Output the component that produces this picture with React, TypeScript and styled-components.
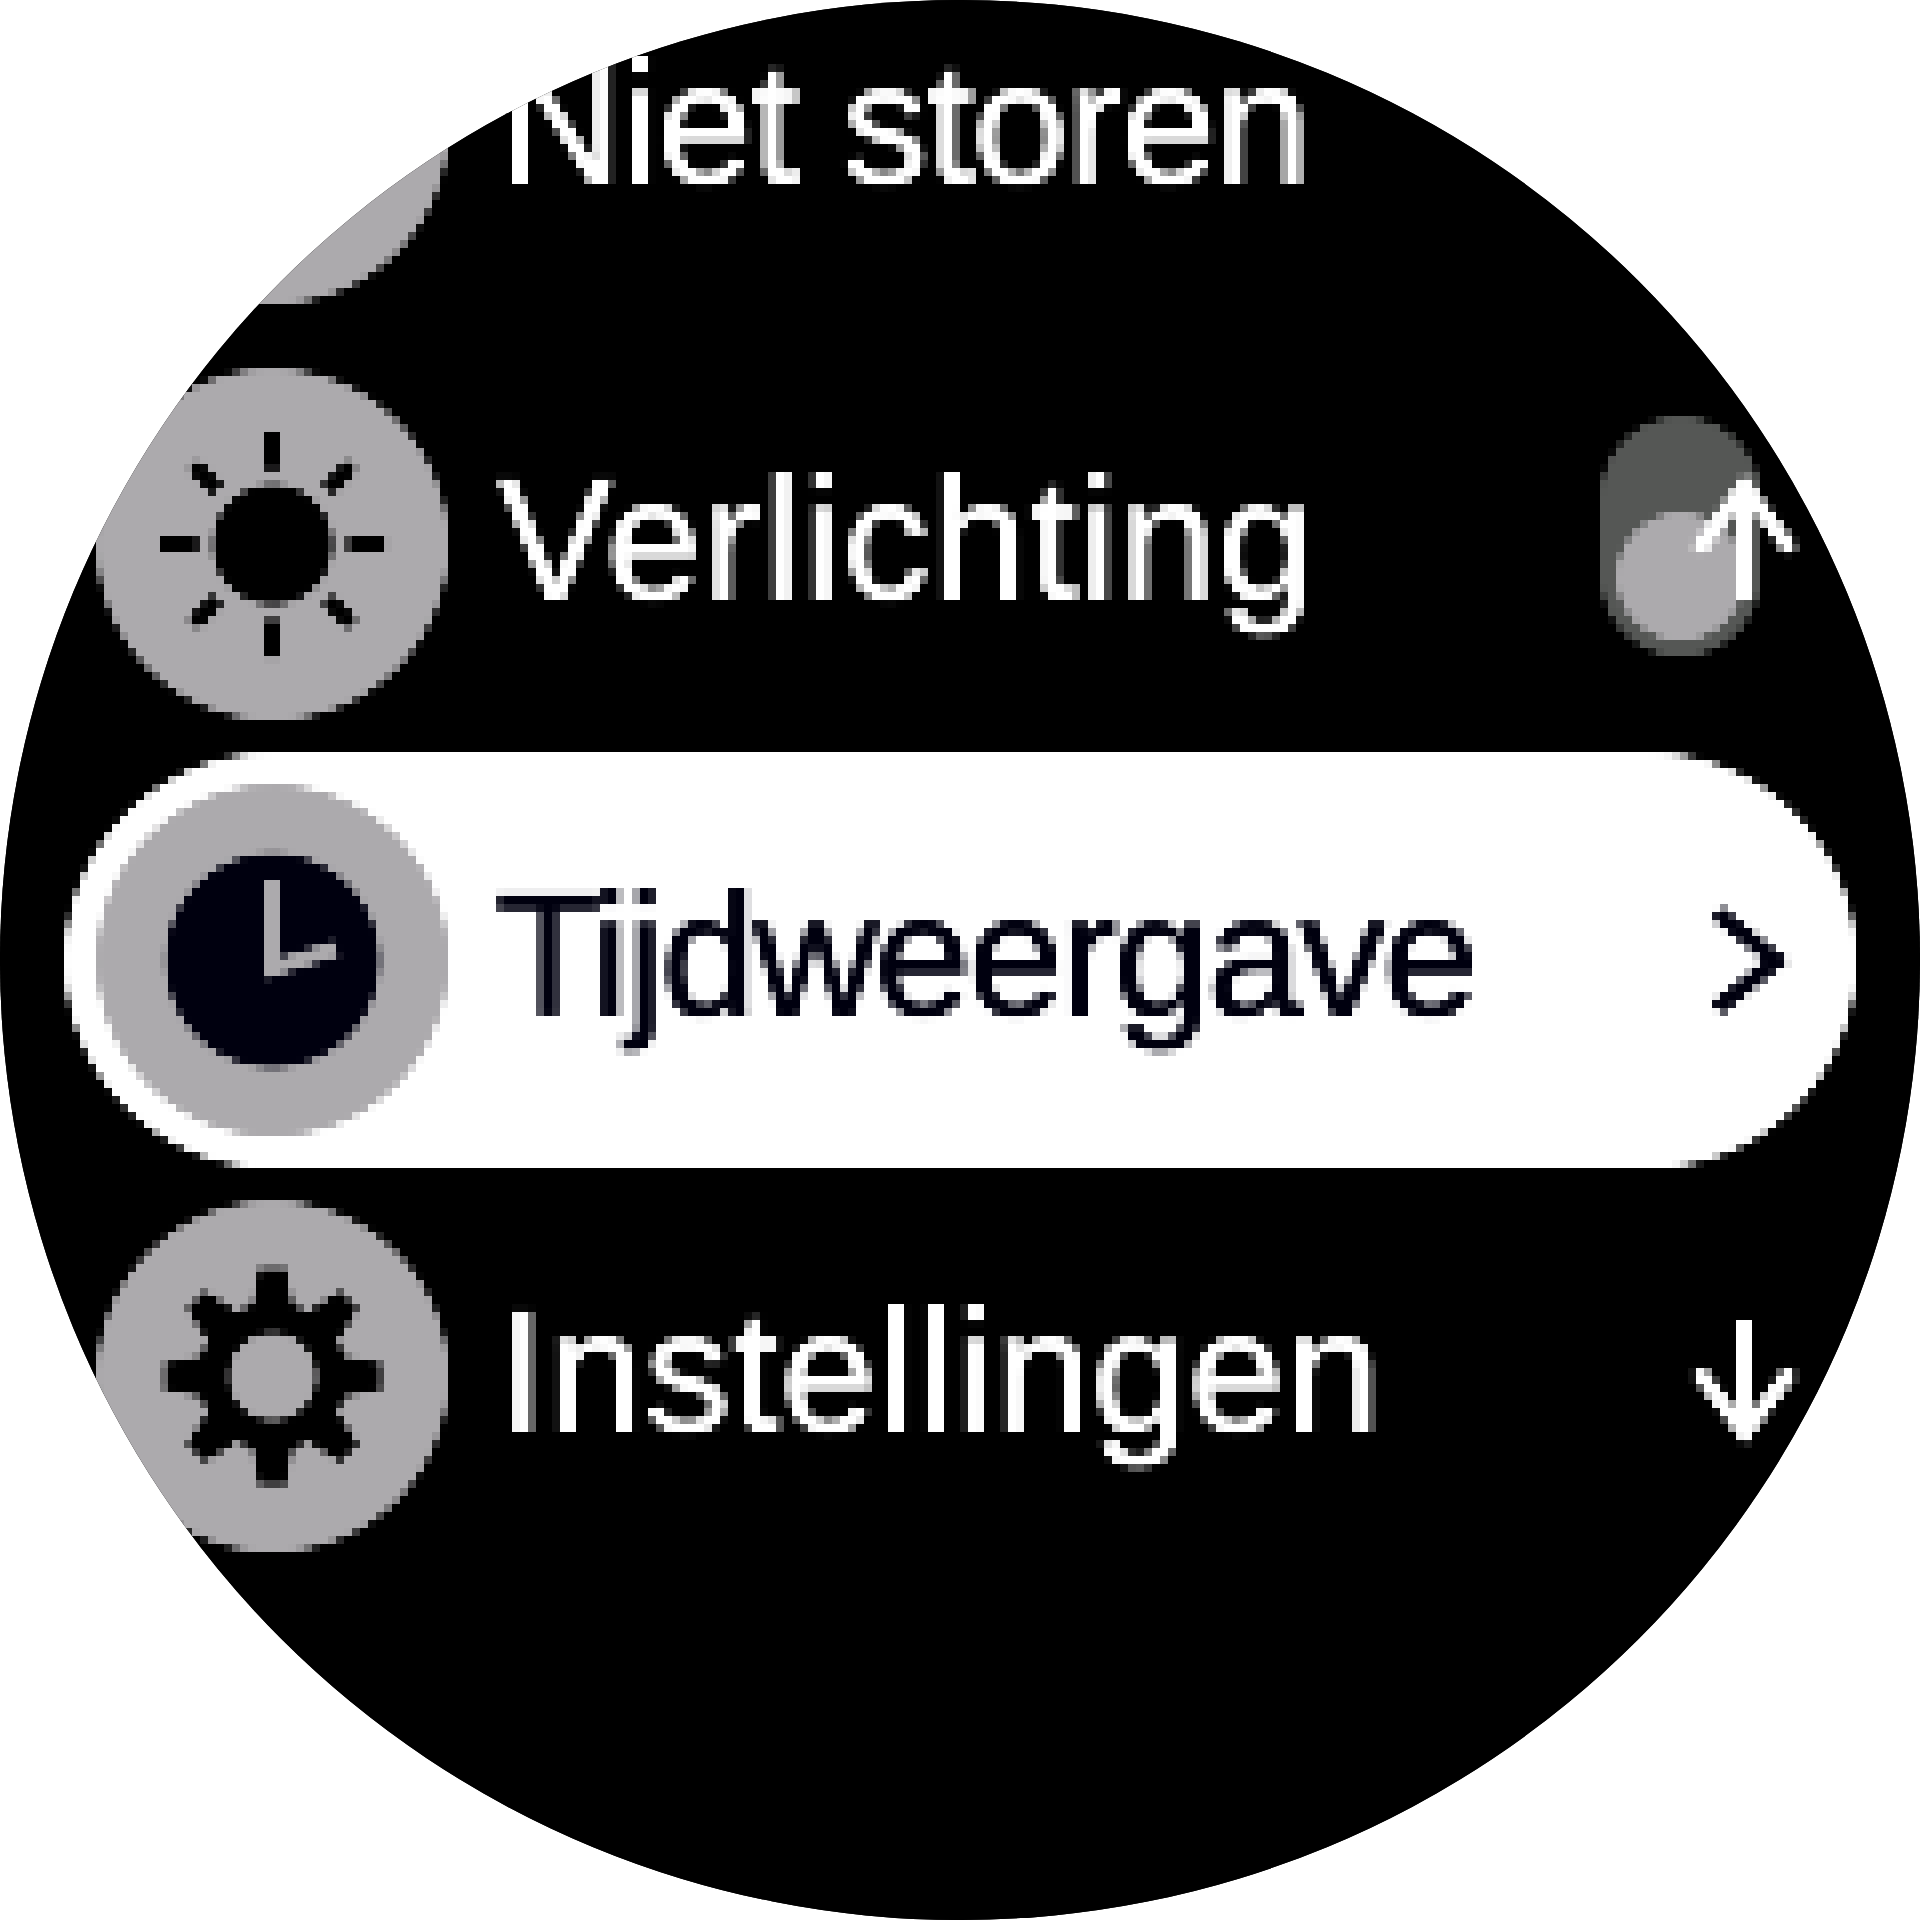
import React from "react";
import styled, { createGlobalStyle } from "styled-components";

const Global = createGlobalStyle`
  html, body { margin: 0; padding: 0; background: #ffffff; }
`;

const INK = "#00000f";
const DISC = "#acaaad";

const Screen = styled.main`
  width: 1920px;
  height: 1920px;
  border-radius: 50%;
  overflow: hidden;
  background: #000000;
`;

const Display = styled.div`
  width: 1920px;
  height: 1920px;
  overflow: hidden;
  background: #000000;
  filter: url(#lowres);
`;

const Menu = styled.ul`
  list-style: none;
  margin: -80px 0 0;
  padding: 0;
`;

const Row = styled.li<{ $selected?: boolean }>`
  display: flex;
  align-items: center;
  height: 416px;
  margin: 0 64px;
  padding: 0 56px 0 32px;
  box-sizing: border-box;
  border-radius: 208px;
  background: ${(p) => (p.$selected ? "#ffffff" : "transparent")};
  color: ${(p) => (p.$selected ? INK : "#ffffff")};
`;

const IconDisc = styled.span`
  flex: none;
  width: 352px;
  height: 352px;
  border-radius: 50%;
  background: ${DISC};
  display: flex;
  align-items: center;
  justify-content: center;
`;

const Label = styled.span<{ $tracking: number; $inset: number }>`
  margin-left: ${(p) => p.$inset}px;
  padding-bottom: 12px;
  font-family: "Liberation Sans", Arial, sans-serif;
  font-size: 173px;
  line-height: 200px;
  letter-spacing: ${(p) => p.$tracking}px;
  -webkit-text-stroke: 2px currentColor;
  white-space: nowrap;
`;

const Trail = styled.span`
  position: relative;
  flex: none;
  margin-left: auto;
  width: 112px;
  height: 160px;
`;

const Glyph = styled.svg`
  position: absolute;
  inset: 0;
  width: 112px;
  height: 160px;
  overflow: visible;
`;

const ScrollTrack = styled.span`
  position: absolute;
  left: -88px;
  top: -48px;
  width: 160px;
  height: 240px;
  box-sizing: border-box;
  padding: 16px;
  border-radius: 80px;
  background: #555755;
  display: flex;
  flex-direction: column;
  justify-content: flex-end;
`;

const ScrollThumb = styled.span`
  width: 128px;
  height: 128px;
  border-radius: 50%;
  background: ${DISC};
`;

const FilterDefs = styled.svg`
  position: absolute;
  width: 0;
  height: 0;
`;

const Sun = () => (
  <svg width="352" height="352" viewBox="-176 -176 352 352">
    <circle r="60" fill="#000" />
    <g stroke="#000" strokeWidth="16">
      {[0, 90, 180, 270].map((a) => (
        <line key={a} x1="0" y1="-113" x2="0" y2="-75" transform={`rotate(${a})`} />
      ))}
      {[45, 135, 225, 315].map((a) => (
        <line key={a} x1="0" y1="-112" x2="0" y2="-78" transform={`rotate(${a})`} />
      ))}
    </g>
  </svg>
);

const Clock = () => (
  <svg width="352" height="352" viewBox="-176 -176 352 352">
    <circle r="107" fill={INK} />
    <path d="M0 -80 V8 L64 -12" fill="none" stroke={DISC} strokeWidth="16" />
  </svg>
);

const Gear = () => (
  <svg width="352" height="352" viewBox="-176 -176 352 352">
    <circle r="74" fill="#000" />
    {[0, 45, 90, 135, 180, 225, 270, 315].map((a) => (
      <polygon key={a} points="-13,-108 13,-108 21,-68 -21,-68" fill="#000" transform={`rotate(${a})`} />
    ))}
    <circle r="44" fill={DISC} />
  </svg>
);

const ArrowUp = () => (
  <Glyph viewBox="0 0 112 160" fill="none" stroke="#fff" strokeWidth="16">
    <path d="M56 136 V20 M9 86 L56 22 L103 86" />
  </Glyph>
);

const ArrowDown = () => (
  <Glyph viewBox="0 0 112 160" fill="none" stroke="#fff" strokeWidth="16">
    <path d="M56 24 V138 M9 74 L56 136 L103 74" />
  </Glyph>
);

const Chevron = () => (
  <Glyph viewBox="0 0 112 160" fill="none" stroke={INK} strokeWidth="16">
    <path d="M28 32 L88 80 L28 128" />
  </Glyph>
);

export default function App() {
  return (
    <>
      <Global />
      <FilterDefs aria-hidden="true">
        <filter
          id="lowres"
          filterUnits="userSpaceOnUse"
          x="0"
          y="0"
          width="1920"
          height="1920"
          colorInterpolationFilters="sRGB"
        >
          <feGaussianBlur in="SourceGraphic" stdDeviation="1.8" result="soft" />
          <feFlood x="3" y="3" width="1" height="1" floodColor="#000" />
          <feComposite x="0" y="0" width="8" height="8" />
          <feTile x="0" y="0" width="1920" height="1920" result="grid" />
          <feComposite in="soft" in2="grid" operator="in" />
          <feMorphology operator="dilate" radius="3" result="d" />
          <feOffset in="d" dx="1" dy="0" result="d1" />
          <feOffset in="d" dx="0" dy="1" result="d2" />
          <feOffset in="d" dx="1" dy="1" result="d3" />
          <feMerge>
            <feMergeNode in="d" />
            <feMergeNode in="d1" />
            <feMergeNode in="d2" />
            <feMergeNode in="d3" />
          </feMerge>
        </filter>
      </FilterDefs>
      <Screen>
        <Display>
          <Menu>
            <Row>
              <IconDisc />
              <Label $inset={50} $tracking={-2.4}>Niet storen</Label>
            </Row>
            <Row>
              <IconDisc>
                <Sun />
              </IconDisc>
              <Label $inset={49} $tracking={1.8}>Verlichting</Label>
              <Trail>
                <ScrollTrack>
                  <ScrollThumb />
                </ScrollTrack>
                <ArrowUp />
              </Trail>
            </Row>
            <Row $selected>
              <IconDisc>
                <Clock />
              </IconDisc>
              <Label $inset={47} $tracking={-3.6}>Tijdweergave</Label>
              <Trail>
                <Chevron />
              </Trail>
            </Row>
            <Row>
              <IconDisc>
                <Gear />
              </IconDisc>
              <Label $inset={50} $tracking={0.7}>Instellingen</Label>
              <Trail>
                <ArrowDown />
              </Trail>
            </Row>
          </Menu>
        </Display>
      </Screen>
    </>
  );
}
